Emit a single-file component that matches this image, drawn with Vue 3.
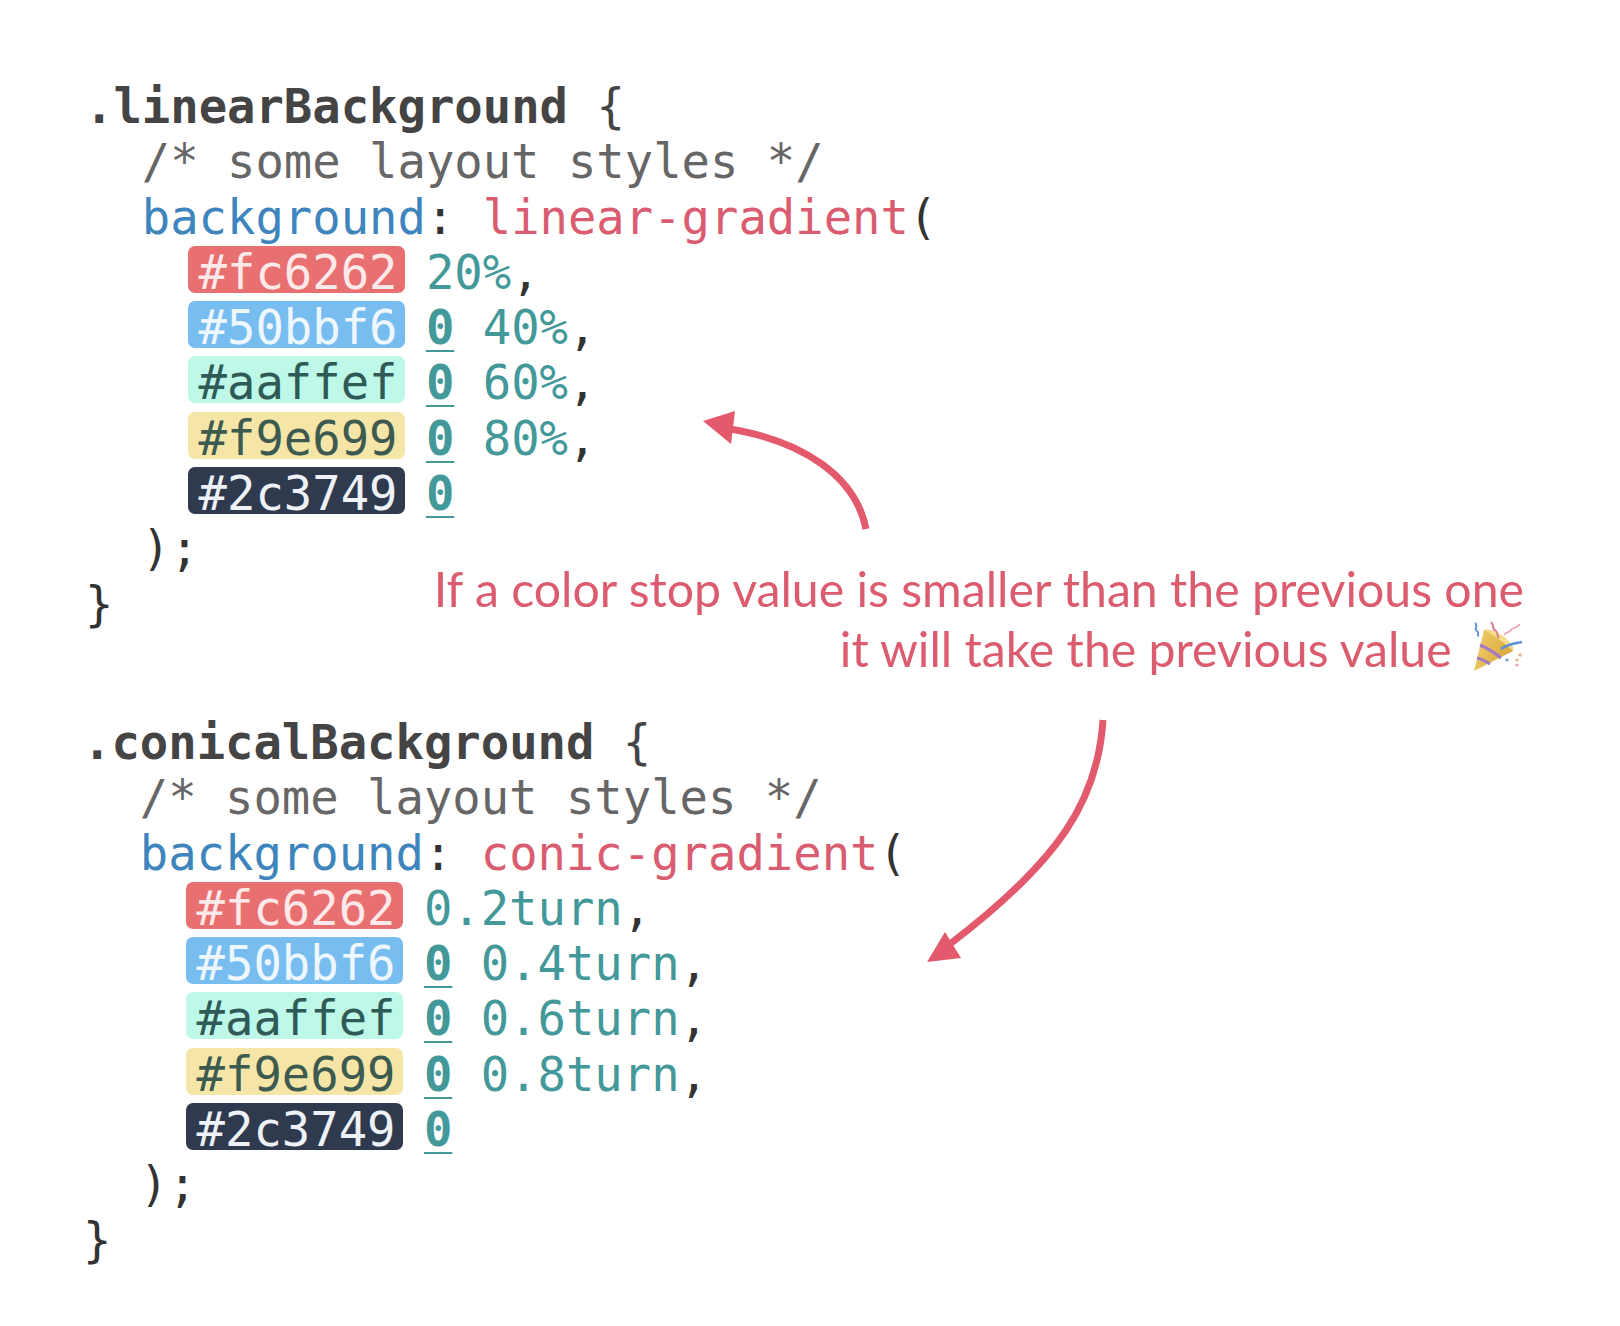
<script setup>
const blocks = [
  {
    cls: 'first', name: '.linearBackground', fn: 'linear-gradient',
    stops: ['20%', '40%', '60%', '80%', ''],
  },
  {
    cls: 'second', name: '.conicalBackground', fn: 'conic-gradient',
    stops: ['0.2turn', '0.4turn', '0.6turn', '0.8turn', ''],
  },
]
const swatches = [
  { hex: '#fc6262', cls: 'red' },
  { hex: '#50bbf6', cls: 'blue' },
  { hex: '#aaffef', cls: 'mint' },
  { hex: '#f9e699', cls: 'sand' },
  { hex: '#2c3749', cls: 'navy' },
]
</script>

<template>
  <main class="page">
    <section v-for="b in blocks" :key="b.name" class="code" :class="b.cls">
      <div class="line"><span class="title">{{ b.name }}</span><span class="brace">{{ ' {' }}</span></div>
      <div class="line in1 comment">/* some layout styles */</div>
      <div class="line in1"><span class="prop">background</span>{{ ': ' }}<span class="fn">{{ b.fn }}</span>(</div>
      <div v-for="(s, i) in swatches" :key="s.hex" class="line in2"><span class="swatch" :class="s.cls">{{ s.hex }}</span><span class="val">{{ ' ' }}<b v-if="i > 0" class="zero">0</b>{{ i > 0 && b.stops[i] ? ' ' : '' }}{{ b.stops[i] }}</span><span v-if="b.stops[i]">,</span></div>
      <div class="line in1">);</div>
      <div class="line">}</div>
    </section>

    <svg class="arrows" viewBox="0 0 1620 1326" aria-hidden="true">
      <g fill="none" stroke="#e35a6c" stroke-width="7">
        <path d="M866 529C856 478 805 440 724 428" />
        <path d="M1103 720C1098 800 1060 860 950 944" />
      </g>
      <g fill="#e35a6c">
        <path d="M703 421L735 411L731 444Z" />
        <path d="M927 962L945 932L961 958Z" />
      </g>
    </svg>

    <p class="note">
      If a color stop value is smaller than the previous one<br />
      it will take the previous value
      <svg class="party" viewBox="0 0 52 52" aria-hidden="true">
        <defs>
          <linearGradient id="cone" x1="0" y1="0" x2="1" y2="0.3">
            <stop offset="0" stop-color="#f2d071" />
            <stop offset="0.6" stop-color="#e3b84e" />
            <stop offset="1" stop-color="#d9a93f" />
          </linearGradient>
        </defs>
        <path d="M2 50L12 9C20 6 43 21 41 30Z" fill="url(#cone)" />
        <path d="M12 9C20 6 43 21 41 30C35 24 22 14 12 9Z" fill="#f5dc8e" />
        <path d="M8 24C15 27 23 32 29 37M5 37C10 38 15 41 18 43" fill="none" stroke="#a47cc2" stroke-width="3.2" />
        <path d="M3 2C7 5 1 8 5 10C8 12 4 14 7 15" fill="none" stroke="#5a8fd6" stroke-width="1.8" />
        <path d="M19 1C23 5 19 8 24 10C27 12 24 15 27 17" fill="none" stroke="#d97f8f" stroke-width="2" />
        <path d="M32 14C35 9 37 13 39 9C41 5 44 9 48 3" fill="none" stroke="#eba6b4" stroke-width="1.8" />
        <path d="M29 28C36 23 43 22 50 21" fill="none" stroke="#5a8fd6" stroke-width="2.6" />
        <circle cx="48" cy="34" r="1.8" fill="#e6b48c" />
        <circle cx="45" cy="39" r="1.6" fill="#e6b48c" />
        <circle cx="45" cy="44" r="1.6" fill="#e6a4a8" />
        <circle cx="35" cy="39" r="1.6" fill="#7a9fd8" />
      </svg>
    </p>
  </main>
</template>

<style>
body { margin: 0; background: #fff; }
</style>

<style scoped>
.page {
  position: relative;
  box-sizing: border-box;
  width: 1620px;
  height: 1326px;
  padding: 79px 0 0 85px;
  background: #fff;
  overflow: hidden;
}
.code {
  font-family: "DejaVu Sans Mono", monospace;
  font-size: 47.2px;
  line-height: 55.3px;
  color: #333;
  white-space: pre;
}
.second { margin: 83px 0 0 -2px; }
.line { height: 55.3px; }
.in1 { padding-left: 56.8px; }
.in2 { padding-left: 113.6px; }
.title { color: #444; font-weight: 700; }
.brace { color: #444; }
.comment { color: #666; }
.prop { color: #3d85bc; }
.fn { color: #d95c70; }
.val { color: #43999a; }
.zero {
  font-weight: 700;
  text-decoration: underline;
  text-decoration-thickness: 2px;
  text-underline-offset: 6px;
}
.swatch {
  display: inline-block;
  height: 47px;
  line-height: 53px;
  padding: 0 8px 0 11px;
  margin: 0 -8px 0 -11px;
  border-radius: 7px;
  vertical-align: baseline;
}
.red { background: #e97070; color: #fde9e9; }
.blue { background: #78bdf0; color: #eef7fd; }
.mint { background: #bdf8e8; color: #2f5a55; }
.sand { background: #f5e6a8; color: #3c5a50; }
.navy { background: #2f3a4f; color: #eef1f5; }
.arrows {
  position: absolute;
  inset: 0;
  width: 1620px;
  height: 1326px;
}
.note {
  position: absolute;
  top: 558px;
  right: 96px;
  margin: 0;
  font-family: Lato, sans-serif;
  font-size: 48.2px;
  line-height: 60px;
  color: #dc5c6f;
  text-align: right;
  white-space: nowrap;
}
.party {
  width: 52px;
  height: 52px;
  margin-left: 8px;
  vertical-align: -6px;
}
</style>
